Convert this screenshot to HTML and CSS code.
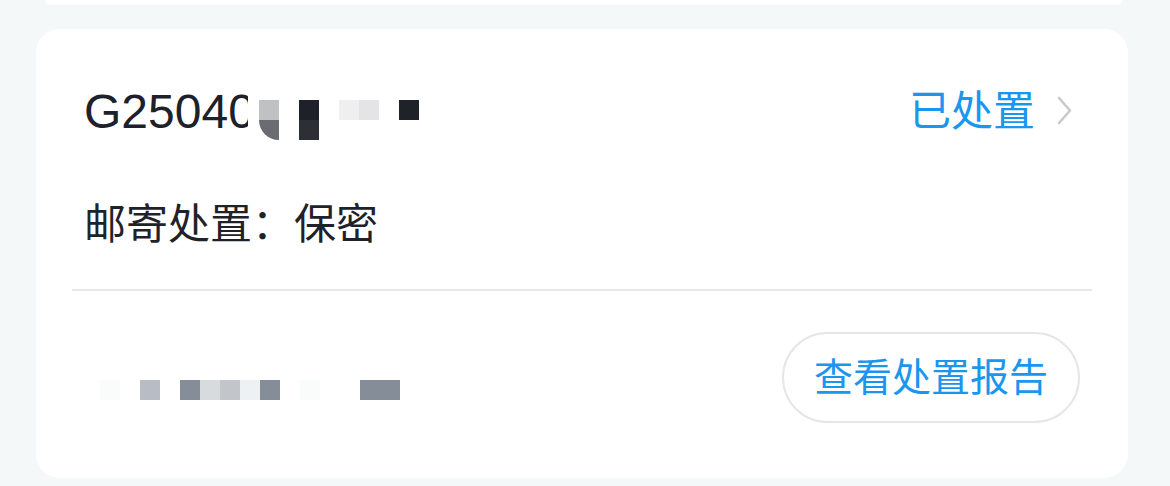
FILE: index.html
```html
<!DOCTYPE html>
<html lang="zh-CN">
<head>
<meta charset="utf-8">
<link rel="stylesheet" href="styles.css">
</head>
<body>
<div class="page">
  <div class="prev-card"></div>
  <div class="card">
    <div class="head-row">
      <div class="title">
        <span class="title-text">G2504</span><span class="title-clip">0</span>
        <div class="mosaic mosaic-title">
          <i class="c1"></i><i></i><i class="c3"></i><i></i><i class="c5"></i><i class="c6"></i><i></i><i class="c8"></i>
          <i class="c9"></i><i></i><i class="c11"></i><i></i><i></i><i></i><i></i><i></i>
        </div>
      </div>
      <div class="status">
        <span class="status-text">已处置</span>
        <svg class="chev" width="24" height="36" viewBox="0 0 24 36"><path d="M3 4 L14 16.5 L3 29" fill="none" stroke="#c8c9cc" stroke-width="2.6" stroke-linecap="round" stroke-linejoin="round"/></svg>
      </div>
    </div>
    <div class="info-row">邮寄处置：保密</div>
    <div class="divider"></div>
    <div class="foot-row">
      <div class="mosaic mosaic-foot">
        <i class="f1"></i><i></i><i class="f3"></i><i></i><i class="f5"></i><i class="f6"></i><i class="f7"></i><i class="f8"></i><i class="f5"></i><i></i><i class="f1"></i><i></i><i></i><i class="f5"></i><i class="f5"></i>
      </div>
      <button class="report-btn">查看处置报告</button>
    </div>
  </div>
</div>
</body>
</html>
```

FILE: styles.css
```css
html, body {
  margin: 0;
  padding: 0;
  background: #f5f8f9;
}
body {
  width: 1170px;
  height: 486px;
  overflow: hidden;
  font-family: "Liberation Sans", "Noto Sans CJK SC", sans-serif;
}
.page {
  padding: 0 42px 0 36px;
}
.prev-card {
  height: 5px;
  margin: 0 6px 0 9px;
  background: #ffffff;
  border-radius: 0 0 20px 20px;
}
.card {
  margin-top: 24px;
  width: 1092px;
  height: 449px;
  box-sizing: border-box;
  background: #ffffff;
  border-radius: 24px;
  padding-top: 50px;
}
.head-row {
  display: flex;
  justify-content: space-between;
  align-items: center;
  height: 66px;
  padding: 0 48px;
}
.title {
  display: flex;
  align-items: flex-start;
  height: 66px;
}
.title-text, .title-clip {
  font-size: 48px;
  line-height: 66px;
  color: #1d2129;
}
.title-clip {
  display: inline-block;
  width: 20px;
  overflow: hidden;
}
.mosaic {
  display: grid;
  grid-auto-rows: 20px;
}
.mosaic i {
  display: block;
  width: 20px;
  height: 20px;
}
.mosaic-title {
  grid-template-columns: repeat(8, 20px);
  margin-top: 21px;
  margin-left: 11px;
}
.mosaic-title .c1 { background: #bfc1c3; }
.mosaic-title .c3 { background: #1e2129; }
.mosaic-title .c5 { background: #f0eff0; }
.mosaic-title .c6 { background: #e4e3e6; }
.mosaic-title .c8 { background: #1f2229; }
.mosaic-title .c9 { background: #6b6c71; border-radius: 0 0 0 20px; }
.mosaic-title .c11 { background: #2c2f35; }
.status {
  display: flex;
  align-items: center;
  gap: 21px;
}
.status-text {
  font-size: 42px;
  line-height: 60px;
  color: #1a96ee;
}
.chev {
  display: block;
}
.info-row {
  margin-top: 50px;
  padding: 0 48px;
  font-size: 42px;
  line-height: 60px;
  color: #1f2329;
}
.divider {
  margin: 34px 36px 0;
  height: 2px;
  background: #e6e7e9;
}
.foot-row {
  margin-top: 41px;
  padding: 0 48px;
  display: flex;
  justify-content: space-between;
  align-items: flex-start;
}
.mosaic-foot {
  grid-template-columns: repeat(15, 20px);
  margin-top: 48px;
  margin-left: 16px;
}
.mosaic-foot .f1 { background: #fafbfb; }
.mosaic-foot .f3 { background: #b8bcc4; }
.mosaic-foot .f5 { background: #858d98; }
.mosaic-foot .f6 { background: #d8dbde; }
.mosaic-foot .f7 { background: #c2c5c9; }
.mosaic-foot .f8 { background: #eef1f3; }
.report-btn {
  height: 91px;
  padding: 0 30px;
  border: 2px solid #e4e6e9;
  border-radius: 46px;
  background: #ffffff;
  font-family: "Liberation Sans", "Noto Sans CJK SC", sans-serif;
  font-size: 39px;
  line-height: 1;
  color: #1a96ee;
}
```
